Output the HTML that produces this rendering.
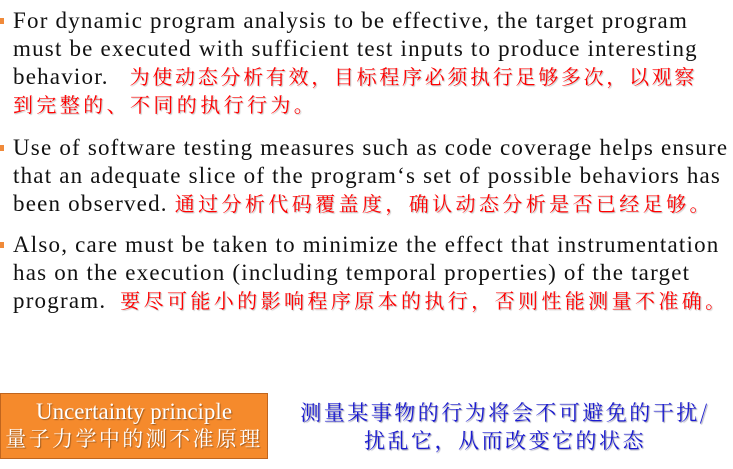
<!DOCTYPE html>
<html><head><meta charset="utf-8"><style>
body{margin:0;width:733px;height:469px;background:#fff;position:relative;overflow:hidden}
.l{position:absolute;left:13px;white-space:nowrap;font-family:"Liberation Serif",serif;font-size:23px;letter-spacing:1.2px;color:#111;line-height:28px}
.r{color:#f00;font-family:"Liberation Serif","Noto Serif CJK SC",serif;font-size:20px;letter-spacing:3.4px;text-shadow:1px 1px 1px rgba(0,0,0,.25)}
.b{position:absolute;left:0;width:4px;height:6px;background:#f08a3a}
.box{position:absolute;left:0;top:393px;width:268px;height:66px;background:#f58a2c;border:1px solid #c0651e;box-sizing:border-box;color:#fff;text-align:center;font-family:"Liberation Serif","Noto Serif CJK SC",serif;text-shadow:1px 1px 1px rgba(0,0,0,.35)}
.blue{position:absolute;top:398px;left:295px;width:420px;text-align:center;color:#1a1ad0;font-family:"Noto Serif CJK SC",serif;font-size:21px;letter-spacing:2.5px;line-height:28px;text-shadow:1px 1px 1px rgba(0,0,60,.4)}
</style></head><body>
<div class="b" style="top:18px"></div>
<div class="l" style="top:7px">For dynamic program analysis to be effective, the target program</div>
<div class="l" style="top:35px">must be executed with sufficient test inputs to produce interesting</div>
<div class="l" style="top:63px">behavior. &nbsp;&nbsp;<span class="r" style="letter-spacing:2.7px">为使动态分析有效，目标程序必须执行足够多次，以观察</span></div>
<div class="l" style="top:91px"><span class="r">到完整的、不同的执行行为。</span></div>
<div class="b" style="top:145px"></div>
<div class="l" style="top:134px">Use of software testing measures such as code coverage helps ensure</div>
<div class="l" style="top:162px">that an adequate slice of the program‘s set of possible behaviors has</div>
<div class="l" style="top:190px">been observed. <span class="r">通过分析代码覆盖度，确认动态分析是否已经足够。</span></div>
<div class="b" style="top:242px"></div>
<div class="l" style="top:231px">Also, care must be taken to minimize the effect that instrumentation</div>
<div class="l" style="top:259px">has on the execution (including temporal properties) of the target</div>
<div class="l" style="top:287px">program. &nbsp;<span class="r">要尽可能小的影响程序原本的执行，否则性能测量不准确。</span></div>
<div class="box"><div style="font-size:23px;line-height:26px;margin-top:5px">Uncertainty principle</div><div style="font-size:21px;line-height:28px;white-space:nowrap;letter-spacing:2.4px">量子力学中的测不准原理</div></div>
<div class="blue">测量某事物的行为将会不可避免的干扰/<br>扰乱它，从而改变它的状态</div>
</body></html>
